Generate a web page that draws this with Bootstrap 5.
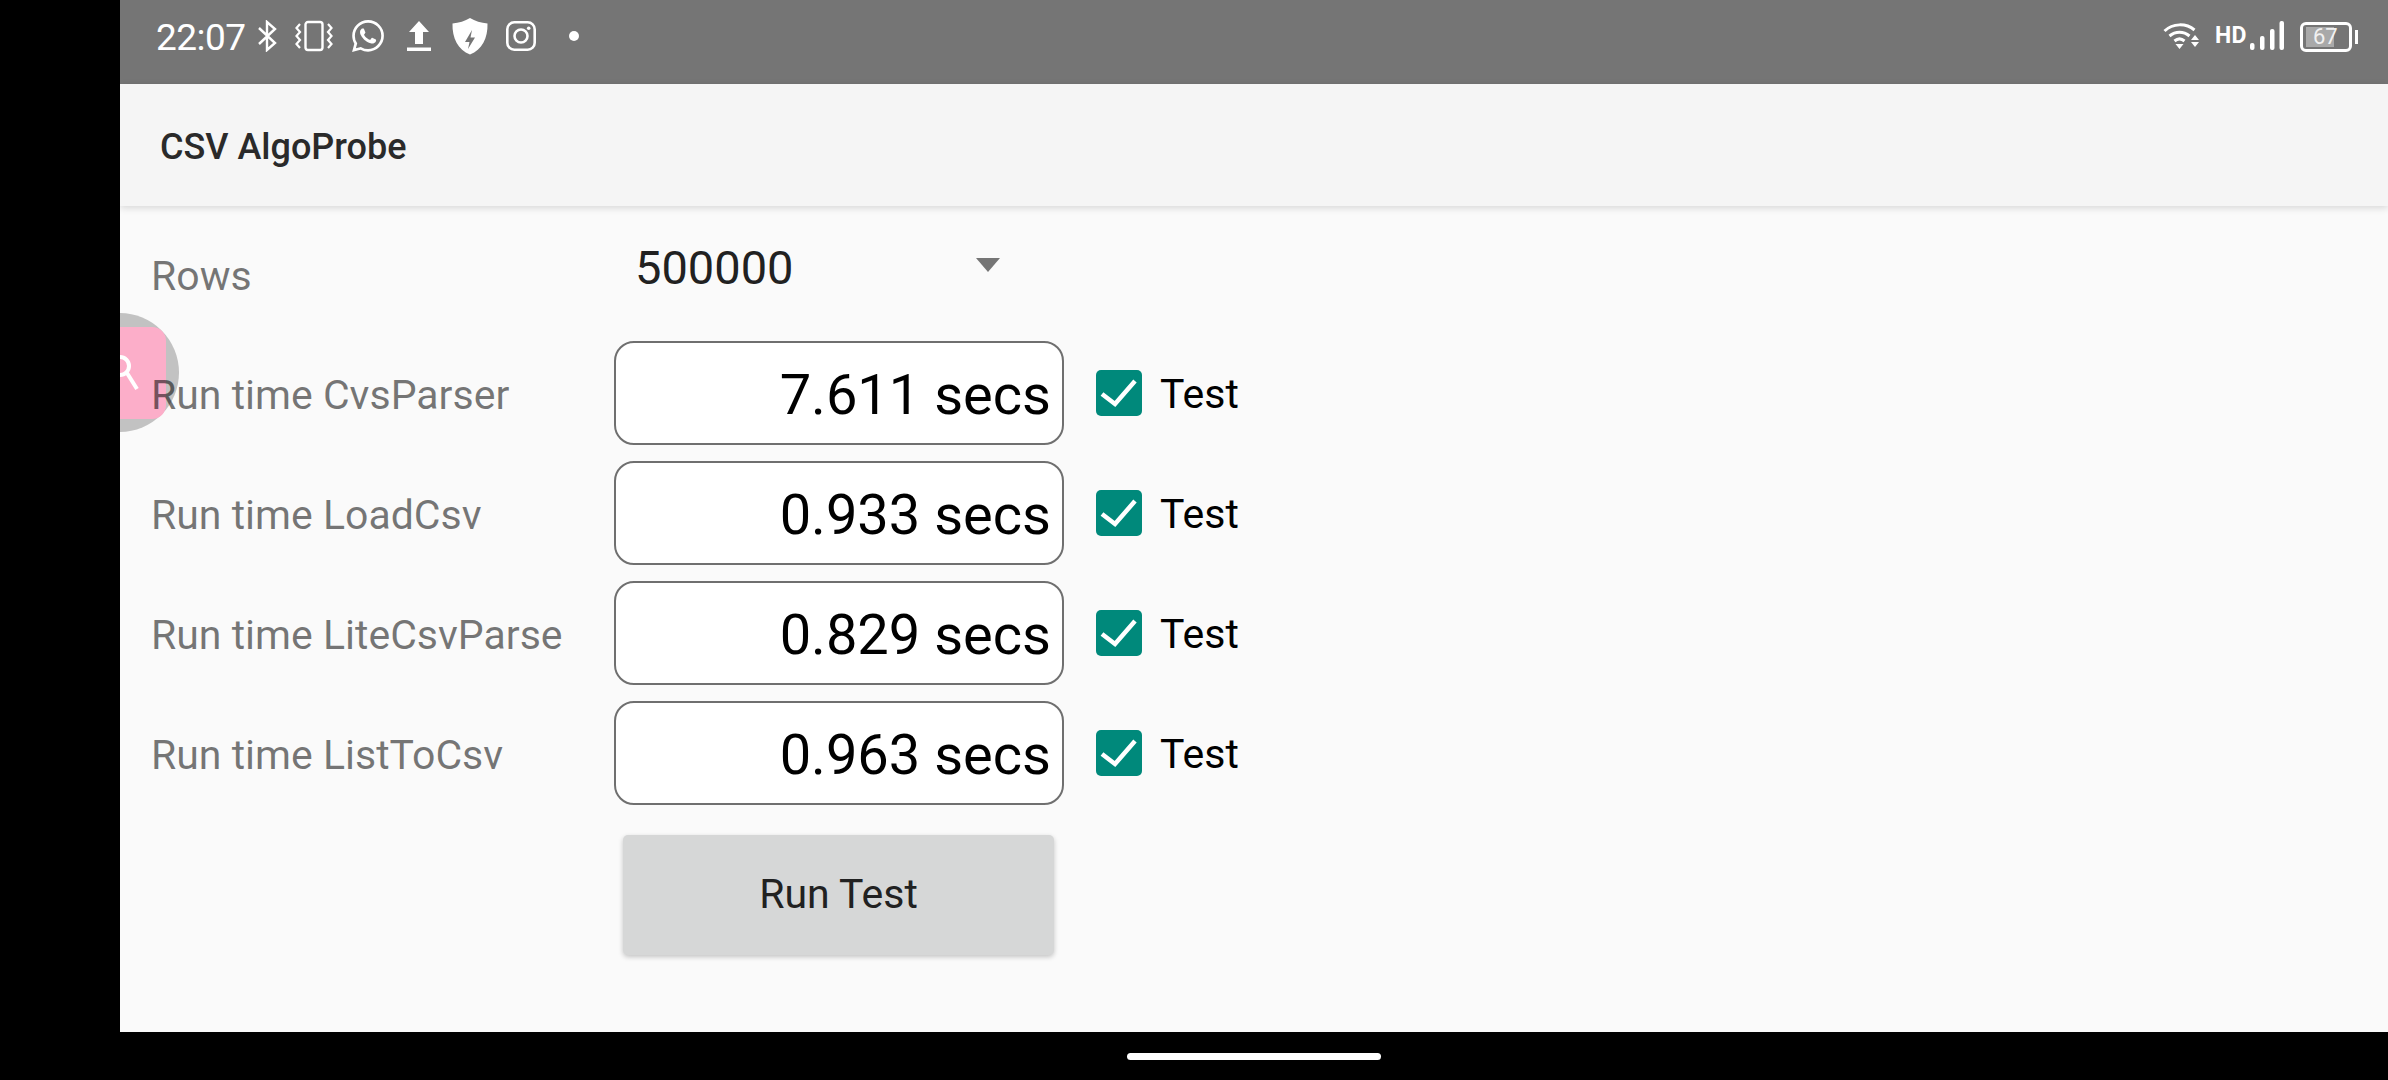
<!DOCTYPE html>
<html lang="en">
<head>
  <meta charset="UTF-8" />
  <meta name="viewport" content="width=device-width, initial-scale=1.0"/>
  <title>CSV AlgoProbe</title>
  <link href="https://cdn.jsdelivr.net/npm/bootstrap@5.3.0/dist/css/bootstrap.min.css" rel="stylesheet" />
  <style>
    html, body { height: 100%; }
    body {
      background-color: #000;
      font-family: Roboto, "Liberation Sans", sans-serif;
      margin: 0;
      overflow: hidden;
    }

    .phone-screen { height: 1032px; padding-left: 120px; }
    .screen-inner { background-color: #fafafa; position: relative; overflow: hidden; height: 100%; }

    /* status bar */
    .status-bar { height: 84px; background-color: #757575; color: #fff; flex: none; }
    .status-left { padding-left: 36px; }
    .status-time { font-size: 37px; line-height: 1; margin-top: -10px; width: 100px; letter-spacing: -0.5px; }
    .status-bar svg { display: block; flex: none; fill: #fff; }
    .ic-bt { margin-top: -12px; }
    .ic-vib { margin-left: 17px; margin-top: -12px; }
    .ic-wa { margin-left: 19px; margin-top: -12px; }
    .ic-up { margin-left: 23px; margin-top: -12px; }
    .ic-shield { margin-left: 21px; margin-top: -12px; }
    .ic-insta { margin-left: 18px; margin-top: -12px; }
    .ic-dot { margin-left: 33px; margin-top: -12px; }
    .status-right { padding-right: 30px; }
    .hd-text { font-size: 23px; font-weight: 700; line-height: 1; width: 30px; margin: -13px 5px 0 15px; letter-spacing: 0.3px; }
    .batt-box {
      width: 52px; height: 30px; border: 3px solid #fff; border-radius: 6px;
      margin: -11px 0 0 16px; position: relative; padding: 2px 3px;
    }
    .batt-fill { background-color: #a9a9a9; height: 100%; width: 28px; }
    .batt-num {
      position: absolute; left: 10px; top: -1px; font-size: 22px; line-height: 26px; color: #f1f1f1;
    }
    .batt-nub { width: 3px; height: 14px; background-color: #fff; margin: -11px 0 0 3px; }

    /* app bar */
    .app-bar {
      height: 122px; background-color: #f5f5f5; padding: 3px 0 0 40px; flex: none;
      box-shadow: 0 2px 7px rgba(0, 0, 0, 0.14); position: relative; z-index: 2;
    }
    .app-title { font-size: 36px; font-weight: 500; color: #2a2a2a; }

    /* form */
    .form-area { padding: 30px 0 0 31px; position: relative; z-index: 1; }
    .field-label { width: 463px; flex: none; font-size: 41px; color: rgba(0, 0, 0, 0.54); line-height: 1; margin-top: 4px; }
    .rows-line { height: 75px; margin-bottom: 30px; }
    .rows-label { margin-top: 6px; }
    .spinner-box { width: 360px; padding-left: 21px; font-size: 47px; color: #212121; margin-top: -12px; line-height: 1; position: relative; }
    .spinner-caret {
      position: absolute; left: 362px; top: 14px; width: 0; height: 0;
      border-left: 12px solid transparent; border-right: 12px solid transparent; border-top: 14px solid #757575;
    }
    .time-line { height: 104px; margin-bottom: 16px; }
    .time-box.form-control {
      width: 450px; height: 104px; flex: none; background-color: #fff; border: 2px solid #6f6f6f;
      border-radius: 20px; text-align: right; font-size: 56px; color: #000; line-height: 100px;
      padding: 2px 11px 0 0;
    }
    .test-check { gap: 18px; margin-left: 32px; }
    .test-check .form-check-input {
      width: 46px; height: 46px; margin: 0; flex: none; border: 0; border-radius: 5px;
      background-color: #00897b;
      background-size: 46px 46px;
      background-image: url("data:image/svg+xml,%3csvg xmlns='http://www.w3.org/2000/svg' viewBox='0 0 46 46'%3e%3cpath fill='none' stroke='%23fff' stroke-width='4.5' d='M6 24l13 10 20-23'/%3e%3c/svg%3e");
    }
    .test-text { font-size: 41px; color: #000; line-height: 1; margin-top: 2px; }
    .run-btn.btn {
      width: 431px; height: 120px; margin: 30px 0 0 472px; display: block;
      background-color: #d6d7d7; border: 0; border-radius: 5px; color: #212121; font-size: 41px;
      box-shadow: 0 2px 5px rgba(0, 0, 0, 0.22);
    }

    /* floating bubble at the left edge */
    .float-bubble {
      position: absolute; left: -60px; top: 313px; width: 119px; height: 119px;
      border-radius: 50%; background-color: #c2c2c2; z-index: 0;
    }
    .float-tile {
      position: absolute; left: -40px; top: 327px; width: 86px; height: 92px;
      border-radius: 14px; background-color: #fcaec9; z-index: 0;
    }
    .float-glass { position: absolute; left: 0; top: 355px; z-index: 0; }

    /* gesture bar */
    .gesture-bar { height: 48px; padding-left: 120px; }
    .gesture-pill { width: 254px; height: 7px; border-radius: 4px; background-color: #fff; }
  </style>
</head>
<body>
  <div class="phone-screen">
    <div class="screen-inner d-flex flex-column">

      <div class="status-bar d-flex align-items-center justify-content-between">
        <div class="status-left d-flex align-items-center">
          <span class="status-time">22:07</span>
          <svg class="ic-bt" width="22" height="32" viewBox="0 0 22 32"><path fill="none" stroke="#fff" stroke-width="2.4" d="M3 8l16 15-8 7V2l8 7L3 24"/></svg>
          <svg class="ic-vib" width="38" height="32" viewBox="0 0 38 32"><rect x="10.5" y="2" width="17" height="28" rx="2.5" fill="none" stroke="#fff" stroke-width="2.4"/><path fill="none" stroke="#fff" stroke-width="2.2" d="M5 4L1.500 8 5 12 1.500 16 5 20 1.500 24 5 28M33 4l3.500 4L33 12l3.500 4L33 20l3.500 4L33 28"/></svg>
          <svg class="ic-wa" width="32" height="32" viewBox="0 0 24 24"><path d="M17.472 14.382c-.297-.149-1.758-.867-2.030-.967-.273-.099-.471-.148-.670.150-.197.297-.767.966-.940 1.164-.173.199-.347.223-.644.075-.297-.150-1.255-.463-2.390-1.475-.883-.788-1.480-1.761-1.653-2.059-.173-.297-.018-.458.130-.606.134-.133.298-.347.446-.520.149-.174.198-.298.298-.497.099-.198.050-.371-.025-.520-.075-.149-.669-1.612-.916-2.207-.242-.579-.487-.500-.669-.510-.173-.008-.371-.010-.570-.010-.198 0-.520.074-.792.372-.272.297-1.040 1.016-1.040 2.479 0 1.462 1.065 2.875 1.213 3.074.149.198 2.096 3.200 5.077 4.487.709.306 1.262.489 1.694.625.712.227 1.360.195 1.871.118.571-.085 1.758-.719 2.006-1.413.248-.694.248-1.289.173-1.413-.074-.124-.272-.198-.570-.347m-5.421 7.403h-.004a9.870 9.870 0 01-5.031-1.378l-.361-.214-3.741.982.998-3.648-.235-.374a9.860 9.860 0 01-1.510-5.260c.001-5.450 4.436-9.884 9.888-9.884 2.640 0 5.122 1.030 6.988 2.898a9.825 9.825 0 012.893 6.994c-.003 5.450-4.437 9.884-9.885 9.884m8.413-18.297A11.815 11.815 0 0012.050 0C5.495 0 .160 5.335.157 11.892c0 2.096.547 4.142 1.588 5.945L.057 24l6.305-1.654a11.882 11.882 0 005.683 1.448h.005c6.554 0 11.890-5.335 11.893-11.893a11.821 11.821 0 00-3.480-8.413z"/></svg>
          <svg class="ic-up" width="24" height="32" viewBox="0 0 24 32"><path d="M12 1l10 11h-6v12H8V12H2z"/><rect y="27.500" width="24" height="3.500"/></svg>
          <svg class="ic-shield" width="36" height="37" viewBox="0 0 36 37"><path fill-rule="evenodd" d="M18 0c5 3 11 5 17.500 5.500C36 20 30 32 18 36.500 6 32 0 20 .5 5.500 7 5 13 3 18 0zM20 12l-7 12h4.500L16 31l7-11.500h-4.500z"/></svg>
          <svg class="ic-insta" width="30" height="30" viewBox="0 0 30 30"><rect x="1.300" y="1.300" width="27.400" height="27.400" rx="7" fill="none" stroke="#fff" stroke-width="2.600"/><circle cx="15" cy="15" r="6.500" fill="none" stroke="#fff" stroke-width="2.600"/><circle cx="22.700" cy="7.300" r="1.800"/></svg>
          <svg class="ic-dot" width="10" height="10" viewBox="0 0 10 10"><circle cx="5" cy="5" r="5"/></svg>
        </div>
        <div class="status-right d-flex align-items-center">
          <svg class="ic-wifi" width="37" height="28" viewBox="0 0 37 28" style="margin-top:-14px"><path fill="none" stroke="#fff" stroke-width="3" d="M1.500 10C10 2 23 2 31.500 9M6.500 15c6-5 14-5 20 0M11.500 20c3.500-3 6.500-3 10 0"/><path d="M12.500 23h8l-4 5zM28 19l4-5 4 5zM28 21h8l-4 5z"/></svg>
          <span class="hd-text">HD</span>
          <svg width="34" height="29" viewBox="0 0 34 29" style="margin-top:-14px"><rect x="0" y="22" width="4.500" height="7" rx="2"/><rect x="10" y="15" width="4.500" height="14" rx="2"/><rect x="20" y="8" width="4.500" height="21" rx="2"/><rect x="29.500" y="0" width="4.500" height="29" rx="2"/></svg>
          <div class="batt-box"><div class="batt-fill"></div><span class="batt-num">67</span></div>
          <div class="batt-nub"></div>
        </div>
      </div>

      <div class="app-bar d-flex align-items-center">
        <span class="app-title">CSV AlgoProbe</span>
      </div>

      <div class="float-bubble"></div>
      <div class="float-tile"></div>
      <svg class="float-glass" width="30" height="36" viewBox="0 0 30 36"><circle cx="0" cy="11" r="9" fill="none" stroke="#fff" stroke-width="4"/><path stroke="#fff" stroke-width="4" d="M7 18l10 16"/></svg>

      <div class="form-area flex-grow-1">
        <div class="rows-line d-flex align-items-center">
          <div class="field-label rows-label">Rows</div>
          <div class="spinner-box">500000<span class="spinner-caret"></span></div>
        </div>

        <div class="time-line d-flex align-items-center">
          <div class="field-label">Run time CvsParser</div>
          <div class="time-box form-control">7.611 secs</div>
          <label class="test-check d-flex align-items-center"><input class="form-check-input" type="checkbox" checked /><span class="test-text">Test</span></label>
        </div>
        <div class="time-line d-flex align-items-center">
          <div class="field-label">Run time LoadCsv</div>
          <div class="time-box form-control">0.933 secs</div>
          <label class="test-check d-flex align-items-center"><input class="form-check-input" type="checkbox" checked /><span class="test-text">Test</span></label>
        </div>
        <div class="time-line d-flex align-items-center">
          <div class="field-label">Run time LiteCsvParse</div>
          <div class="time-box form-control">0.829 secs</div>
          <label class="test-check d-flex align-items-center"><input class="form-check-input" type="checkbox" checked /><span class="test-text">Test</span></label>
        </div>
        <div class="time-line d-flex align-items-center">
          <div class="field-label">Run time ListToCsv</div>
          <div class="time-box form-control">0.963 secs</div>
          <label class="test-check d-flex align-items-center"><input class="form-check-input" type="checkbox" checked /><span class="test-text">Test</span></label>
        </div>

        <button class="run-btn btn" type="button">Run Test</button>
      </div>
    </div>
  </div>
  <div class="gesture-bar d-flex align-items-center justify-content-center">
    <div class="gesture-pill"></div>
  </div>
  <script src="https://cdn.jsdelivr.net/npm/bootstrap@5.3.0/dist/js/bootstrap.bundle.min.js"></script>
</body>
</html>
